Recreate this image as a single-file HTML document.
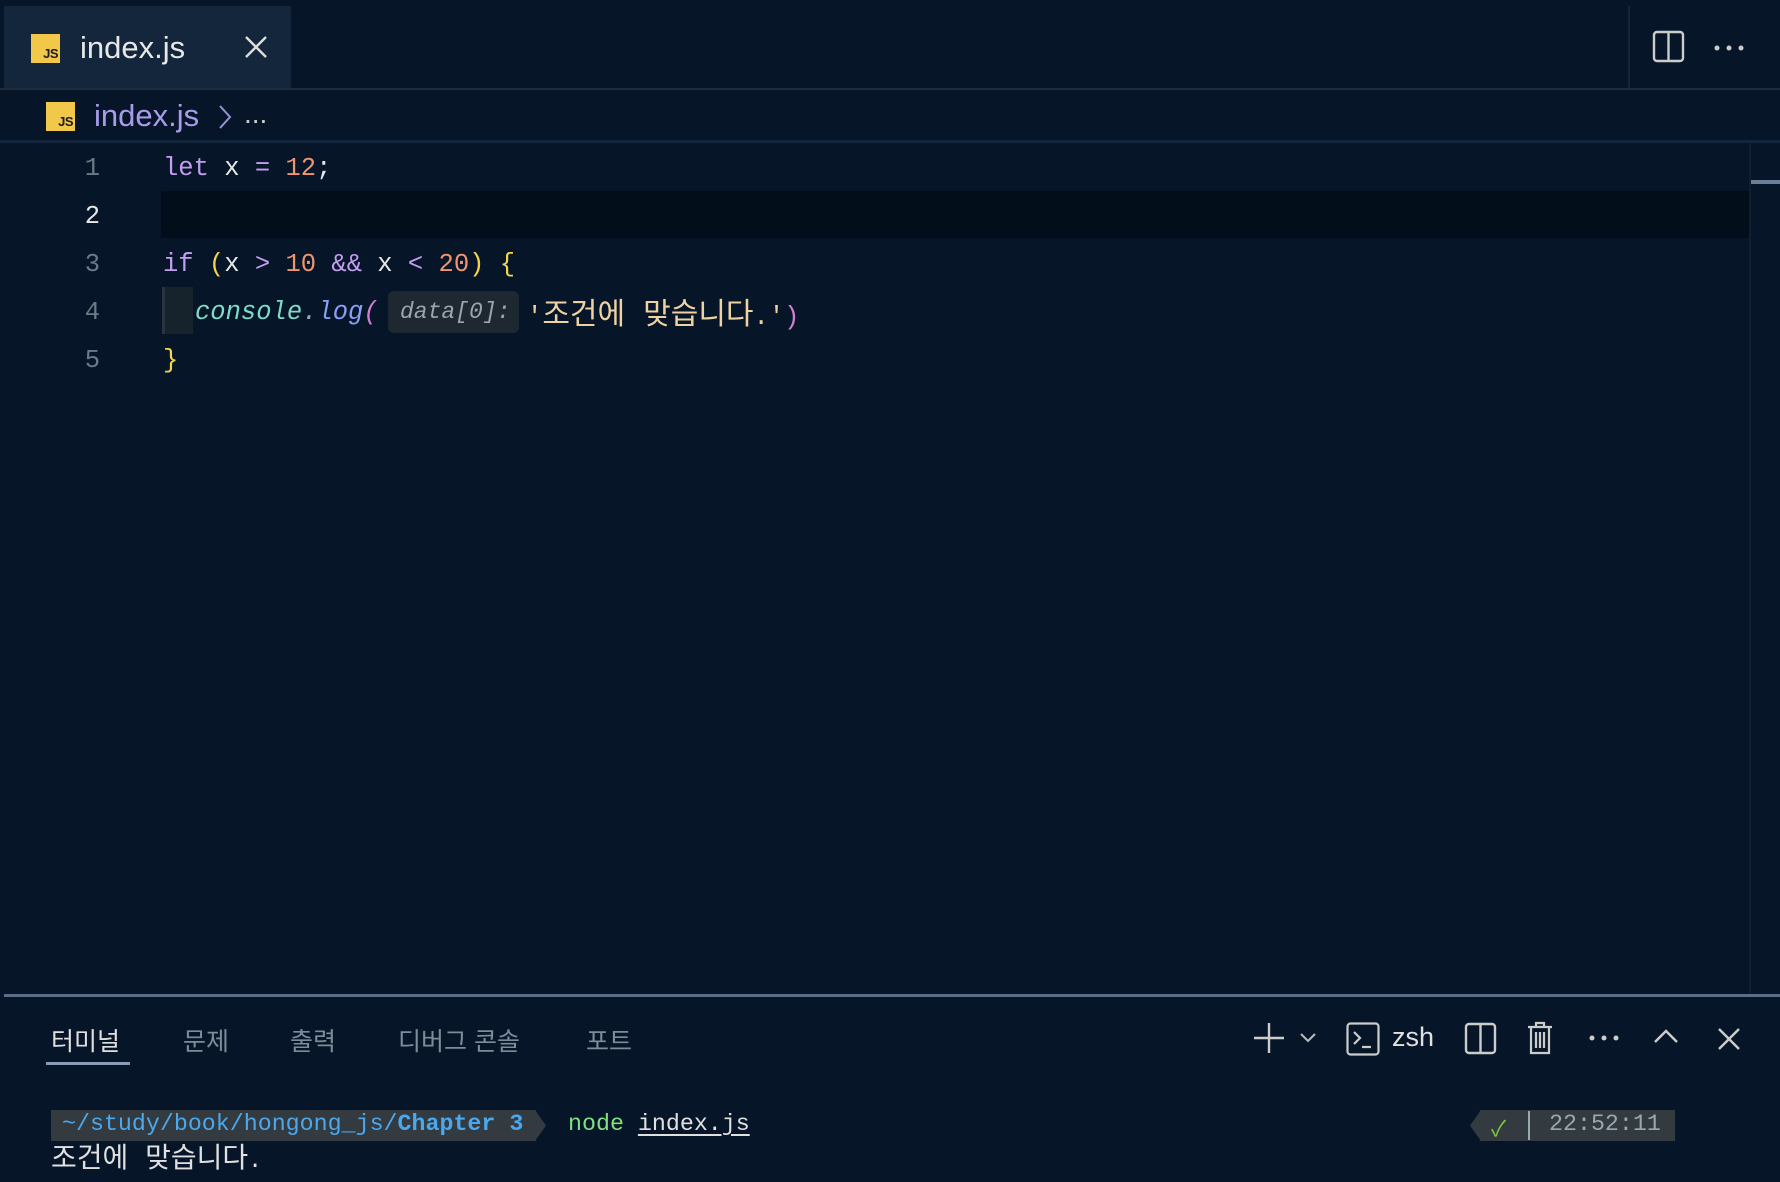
<!DOCTYPE html>
<html><head><meta charset="utf-8"><style>
*{margin:0;padding:0;box-sizing:border-box}
body{width:1780px;height:1182px;background:#061628;position:relative;overflow:hidden;font-family:"Liberation Sans","Noto Sans CJK KR",sans-serif;color:#d4d4d4}
.a{position:absolute}
.mono{font-family:"Liberation Mono","Noto Sans CJK KR",monospace;font-size:25.5px;white-space:pre}
.js{position:absolute;width:29px;height:29px;background:#f2c84b;color:#1a1a1a;font:bold 13px "Liberation Sans",sans-serif;display:flex;align-items:flex-end;justify-content:flex-end;padding:0 2px 2px 0;letter-spacing:-0.5px}
.ln{position:absolute;width:100px;text-align:right;left:0;color:#6b7a88}
.code{position:absolute;left:163px}
.tt{position:absolute;top:1022px;font-size:25px;color:#7f8b98}
.k{font-size:30px}
</style></head><body>
<!-- tab bar -->
<div class="a" style="left:4px;top:6px;width:287px;height:83px;background:#13263b"></div>
<div class="js" style="left:31px;top:34px">JS</div>
<div class="a" style="left:80px;top:30px;font-size:31px;color:#e8e8e8">index.js</div>
<svg class="a" style="left:244px;top:35px" width="24" height="24"><path d="M2 2L22 22M22 2L2 22" stroke="#ddd" stroke-width="2.4"/></svg>
<div class="a" style="left:1628px;top:6px;width:2px;height:82px;background:#15263a"></div>
<svg class="a" style="left:1652px;top:30px" width="33" height="33"><rect x="2" y="2" width="29" height="29" rx="3" fill="none" stroke="#ccc" stroke-width="2.4"/><path d="M16.5 2V31" stroke="#ccc" stroke-width="2.4"/></svg>
<svg class="a" style="left:1710px;top:42px" width="40" height="12"><circle cx="7" cy="6" r="2.5" fill="#ccc"/><circle cx="19" cy="6" r="2.5" fill="#ccc"/><circle cx="31" cy="6" r="2.5" fill="#ccc"/></svg>
<div class="a" style="left:0;top:88px;width:1780px;height:2px;background:#232b3a"></div>
<!-- breadcrumb -->
<div class="js" style="left:46px;top:102px">JS</div>
<div class="a" style="left:94px;top:98px;font-size:31px;color:#a99bea">index.js</div>
<svg class="a" style="left:217px;top:104px" width="16" height="26"><path d="M3 2L13 13L3 24" fill="none" stroke="#9a90d8" stroke-width="2"/></svg>
<div class="a" style="left:244px;top:98px;font-size:28px;color:#ccc">...</div>
<div class="a" style="left:0;top:140px;width:1780px;height:3px;background:#13253a"></div>
<!-- editor -->
<div class="a" style="left:161px;top:191px;width:1588px;height:47px;background:#020e1a"></div>
<div class="a" style="left:1749px;top:143px;width:2px;height:852px;background:#0f1f30"></div>
<div class="a" style="left:1751px;top:180px;width:29px;height:4px;background:#6b7f98"></div>
<div class="mono">
<div class="ln" style="top:154px">1</div>
<div class="ln" style="top:202px;color:#e8e8e8">2</div>
<div class="ln" style="top:250px">3</div>
<div class="ln" style="top:298px">4</div>
<div class="ln" style="top:346px">5</div>
<div class="code" style="top:154px"><span style="color:#c49cf0">let</span><span style="color:#e8e8e8"> x </span><span style="color:#c49cf0">=</span> <span style="color:#f0946e">12</span><span style="color:#e8e8e8">;</span></div>
<div class="code" style="top:250px"><span style="color:#c49cf0">if</span> <span style="color:#f5d547">(</span><span style="color:#e8e8e8">x </span><span style="color:#c49cf0">&gt;</span> <span style="color:#f0946e">10</span> <span style="color:#c49cf0">&amp;&amp;</span><span style="color:#e8e8e8"> x </span><span style="color:#c49cf0">&lt;</span> <span style="color:#f0946e">20</span><span style="color:#f5d547">)</span> <span style="color:#f5d547">{</span></div>
<div class="a" style="left:162px;top:287px;width:31px;height:47px;background:#16222c;border-left:3px solid #2a3440"></div>
<div class="code" style="left:195px;top:298px;font-style:italic"><span style="color:#7fdbc6">console</span><span style="color:#9ab">.</span><span style="color:#8aa0f5">log</span><span style="color:#d07fd0">(</span></div>
<div class="a" style="left:388px;top:291px;width:131px;height:42px;background:#1d2831;border-radius:6px"></div>
<div class="code" style="left:400px;top:299px;font-style:italic;font-size:23px;color:#9aa5ad">data[0]:</div>
<div class="code" style="left:527px;top:289px;color:#efd2a2">'<span class="k">조건에 맞습니다</span>.'<span style="color:#d07fd0">)</span></div>
<div class="code" style="top:346px;color:#f5d547">}</div>
</div>
<!-- panel -->
<div class="a" style="left:4px;top:994px;width:1776px;height:3px;background:#5b6e86"></div>
<div class="tt" style="left:51px;color:#e0e0e0">터미널</div>
<div class="a" style="left:46px;top:1062px;width:84px;height:3px;background:#8a9cb8"></div>
<div class="tt" style="left:183px">문제</div>
<div class="tt" style="left:290px">출력</div>
<div class="tt" style="left:398px">디버그 콘솔</div>
<div class="tt" style="left:586px">포트</div>
<svg class="a" style="left:1252px;top:1021px" width="34" height="34"><path d="M17 2V32M2 17H32" stroke="#ccc" stroke-width="2.4"/></svg>
<svg class="a" style="left:1299px;top:1032px" width="18" height="12"><path d="M2 2L9 9L16 2" fill="none" stroke="#bbb" stroke-width="2"/></svg>
<svg class="a" style="left:1346px;top:1022px" width="34" height="34"><rect x="1.5" y="1.5" width="31" height="31" rx="3" fill="none" stroke="#ccc" stroke-width="2.2"/><path d="M8 10L14 16L8 22M16 25H25" fill="none" stroke="#ccc" stroke-width="2.2"/></svg>
<div class="a" style="left:1392px;top:1022px;font-size:27px;color:#e0e0e0">zsh</div>
<svg class="a" style="left:1464px;top:1022px" width="33" height="33"><rect x="2" y="2" width="29" height="29" rx="3" fill="none" stroke="#ccc" stroke-width="2.4"/><path d="M16.5 2V31" stroke="#ccc" stroke-width="2.4"/></svg>
<svg class="a" style="left:1525px;top:1020px" width="30" height="36"><path d="M3 7H27M11 7V3H19V7M6 7V33H24V7M11 12V28M15 12V28M19 12V28" fill="none" stroke="#ccc" stroke-width="2.2"/></svg>
<svg class="a" style="left:1587px;top:1033px" width="34" height="10"><circle cx="5" cy="5" r="2.5" fill="#ccc"/><circle cx="17" cy="5" r="2.5" fill="#ccc"/><circle cx="29" cy="5" r="2.5" fill="#ccc"/></svg>
<svg class="a" style="left:1653px;top:1028px" width="26" height="16"><path d="M2 14L13 3L24 14" fill="none" stroke="#ccc" stroke-width="2.4"/></svg>
<svg class="a" style="left:1717px;top:1027px" width="24" height="24"><path d="M2 2L22 22M22 2L2 22" stroke="#ccc" stroke-width="2.4"/></svg>
<!-- terminal -->
<div class="a" style="left:51px;top:1110px;width:485px;height:31px;background:#333a40"></div>
<svg class="a" style="left:535px;top:1110px" width="12" height="31"><path d="M0 0L11 15.5L0 31Z" fill="#333a40"/></svg>
<div class="a mono" style="left:62px;top:1111px;font-size:23.3px;color:#4aa8ee">~/study/book/hongong_js/<b>Chapter 3</b></div>
<div class="a mono" style="left:568px;top:1111px;font-size:23.3px;color:#7ee07e">node <span style="color:#e0e0e0;text-decoration:underline;text-underline-offset:4px">index.js</span></div>
<svg class="a" style="left:1469px;top:1110px" width="12" height="31"><path d="M12 0L1 15.5L12 31Z" fill="#333a40"/></svg>
<div class="a" style="left:1480px;top:1110px;width:195px;height:31px;background:#333a40"></div>
<div class="a" style="left:1528px;top:1111px;width:2px;height:29px;background:#9aa"></div>
<div class="a mono" style="left:1491px;top:1111px;font-size:22px;color:#7ec83e">✓</div>
<div class="a mono" style="left:1549px;top:1111px;font-size:23.3px;color:#9aa8b0">22:52:11</div>
<div class="a mono" style="left:51px;top:1136px;font-size:23.3px;color:#e0e0e0"><span style="font-size:28px">조건에 맞습니다</span>.</div>
</body></html>
